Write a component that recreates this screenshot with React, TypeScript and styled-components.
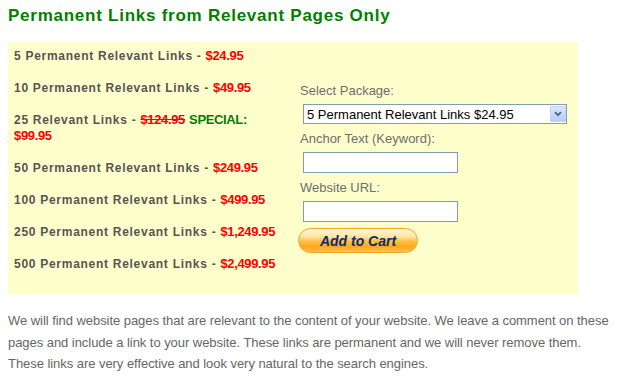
import React from 'react';
import styled, {createGlobalStyle} from 'styled-components';

const GlobalStyle = createGlobalStyle`
  html, body {
    margin: 0;
    padding: 0;
    background: #ffffff;
  }
  body {
    font-family: 'Liberation Sans', Arial, sans-serif;
  }
`;

const Page = styled.div`
  width: 621px;
  padding: 5px 0 0 8px;
  box-sizing: border-box;
`;

const Title = styled.h2`
  margin: 0 0 16px;
  font-size: 17px;
  line-height: 21px;
  letter-spacing: 0.75px;
  font-weight: bold;
  color: #008000;
`;

const OfferBox = styled.div`
  width: 570px;
  height: 252px;
  background: #ffffcc;
  display: grid;
  grid-template-columns: 285px 285px;
  align-items: center;
`;

const PriceList = styled.div`
  align-self: start;
  padding: 6px 14px 0 6px;
`;

const Item = styled.p`
  margin: 0 0 16px;
  font-size: 12px;
  line-height: 16px;
  font-weight: bold;
  letter-spacing: 0.72px;
  color: #555555;
`;

const Price = styled.span<{$old?: boolean; $tone?: 'red' | 'green'}>`
  font-size: 13px;
  letter-spacing: -0.35px;
  color: ${p => (p.$tone === 'green' ? '#008000' : '#ff0000')};
  text-decoration: ${p => (p.$old ? 'line-through' : 'none')};
`;

const OrderForm = styled.form`
  display: flex;
  flex-direction: column;
  align-items: flex-start;
  padding-left: 7px;
`;

const Label = styled.label<{$gap: number}>`
  display: block;
  margin-top: ${p => p.$gap}px;
  font-size: 13px;
  line-height: 16px;
  color: #6e6e6e;
`;

const SelectWrap = styled.div`
  position: relative;
  margin: 5px 0 0 3px;
  width: 264px;
  height: 20px;
`;

const Select = styled.select`
  appearance: none;
  -webkit-appearance: none;
  width: 100%;
  height: 100%;
  box-sizing: border-box;
  border: 1px solid #7f9db9;
  border-radius: 0;
  background: #ffffff;
  padding: 0 0 0 3px;
  font-family: 'Liberation Sans', Arial, sans-serif;
  font-size: 13px;
  color: #000000;
  outline: none;
`;

const DropArrow = styled.span`
  position: absolute;
  top: 2px;
  right: 1px;
  width: 16px;
  height: 16px;
  box-sizing: border-box;
  border: 1px solid #c3d3fd;
  border-radius: 1px;
  background: linear-gradient(#dce7fe, #b7cbf8);
  display: flex;
  align-items: center;
  justify-content: center;
  pointer-events: none;
`;

const TextInput = styled.input`
  margin: 5px 0 0 3px;
  width: 155px;
  height: 21px;
  box-sizing: border-box;
  border: 1px solid #7f9db9;
  background: #ffffff;
  padding: 0 3px;
  outline: none;
`;

const CartButton = styled.button`
  margin: 6px 0 0 -2px;
  width: 120px;
  height: 25px;
  box-sizing: border-box;
  border: 1px solid #f4a52a;
  border-radius: 13px;
  background: linear-gradient(
    #fff6d6 0%,
    #ffe8a6 32%,
    #ffc04a 52%,
    #ffa81e 76%,
    #ffc24e 100%
  );
  font-family: 'Liberation Sans', Arial, sans-serif;
  font-size: 14px;
  font-weight: bold;
  font-style: italic;
  color: #0b2c6a;
  padding: 0;
  cursor: pointer;
`;

const Description = styled.p`
  margin: 16px 0 0;
  width: 612px;
  font-size: 13px;
  line-height: 21.5px;
  letter-spacing: -0.05px;
  color: #666666;
`;

const prices: {qty: string; price: string}[] = [
  {qty: '5 Permanent Relevant Links', price: '$24.95'},
  {qty: '10 Permanent Relevant Links', price: '$49.95'},
];

const laterPrices: {qty: string; price: string}[] = [
  {qty: '50 Permanent Relevant Links', price: '$249.95'},
  {qty: '100 Permanent Relevant Links', price: '$499.95'},
  {qty: '250 Permanent Relevant Links', price: '$1,249.95'},
  {qty: '500 Permanent Relevant Links', price: '$2,499.95'},
];

export default function App() {
  return (
    <Page>
      <GlobalStyle/>
      <Title>Permanent Links from Relevant Pages Only</Title>
      <OfferBox>
        <PriceList>
          {prices.map(p => (
            <Item key={p.qty}>{p.qty} - <Price>{p.price}</Price></Item>
          ))}
          <Item>
            25 Relevant Links - <Price $old>$124.95</Price> <Price $tone="green">SPECIAL:</Price>{' '}
            <Price>$99.95</Price>
          </Item>
          {laterPrices.map(p => (
            <Item key={p.qty}>{p.qty} - <Price>{p.price}</Price></Item>
          ))}
        </PriceList>
        <OrderForm onSubmit={e => e.preventDefault()}>
          <Label $gap={0}>Select Package:</Label>
          <SelectWrap>
            <Select defaultValue="5">
              <option value="5">5 Permanent Relevant Links $24.95</option>
              <option value="10">10 Permanent Relevant Links $49.95</option>
              <option value="25">25 Relevant Links $99.95</option>
              <option value="50">50 Permanent Relevant Links $249.95</option>
              <option value="100">100 Permanent Relevant Links $499.95</option>
              <option value="250">250 Permanent Relevant Links $1,249.95</option>
              <option value="500">500 Permanent Relevant Links $2,499.95</option>
            </Select>
            <DropArrow>
              <svg width="8" height="6" viewBox="0 0 8 6">
                <path d="M1 1.2 L4 4.2 L7 1.2" fill="none" stroke="#4d6185" strokeWidth="1.8"/>
              </svg>
            </DropArrow>
          </SelectWrap>
          <Label $gap={7}>Anchor Text (Keyword):</Label>
          <TextInput type="text"/>
          <Label $gap={7}>Website URL:</Label>
          <TextInput type="text"/>
          <CartButton type="submit">Add to Cart</CartButton>
        </OrderForm>
      </OfferBox>
      <Description>
        We will find website pages that are relevant to the content of your website. We leave a comment on these
        pages and include a link to your website. These links are permanent and we will never remove them.
        These links are very effective and look very natural to the search engines.
      </Description>
    </Page>
  );
}
